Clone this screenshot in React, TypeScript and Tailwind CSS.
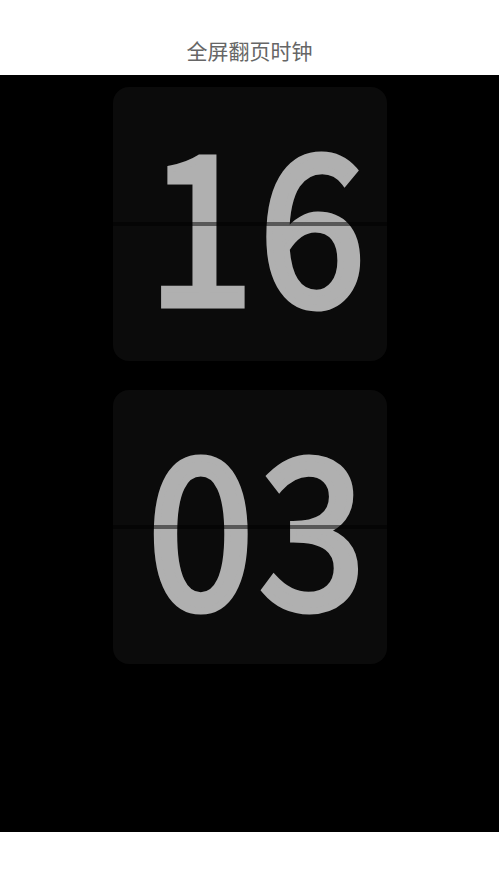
import React from 'react';

function FlipCard({ value }: { value: string }) {
  return (
    <div className="relative flex h-[274px] w-[274px] items-center justify-center overflow-hidden rounded-[16px] bg-[#0b0b0b]">
      <span
        className="mt-[-18px] translate-x-[10px] scale-x-[0.93] font-normal leading-none tracking-[6px] text-[#b0b0b0] [-webkit-text-stroke:7px_#b0b0b0]"
        style={{ fontFamily: '"Noto Sans CJK SC", "Noto Sans", sans-serif', fontSize: 206 }}
      >
        {value}
      </span>
      <div className="absolute left-0 right-0 top-[135px] h-[4px] bg-black/50" />
    </div>
  );
}

export default function App() {
  return (
    <div
      className="flex h-[888px] w-full flex-col bg-white"
      style={{ fontFamily: '"Noto Sans CJK SC", "Noto Sans", sans-serif' }}
    >
      <div className="flex h-[75px] items-end justify-center pb-[14px]">
        <h1 className="text-[21px] leading-none text-[#666666]">全屏翻页时钟</h1>
      </div>
      <div className="flex h-[757px] flex-col items-center gap-[29px] bg-black pt-[12px]">
        <FlipCard value="16" />
        <FlipCard value="03" />
      </div>
    </div>
  );
}
